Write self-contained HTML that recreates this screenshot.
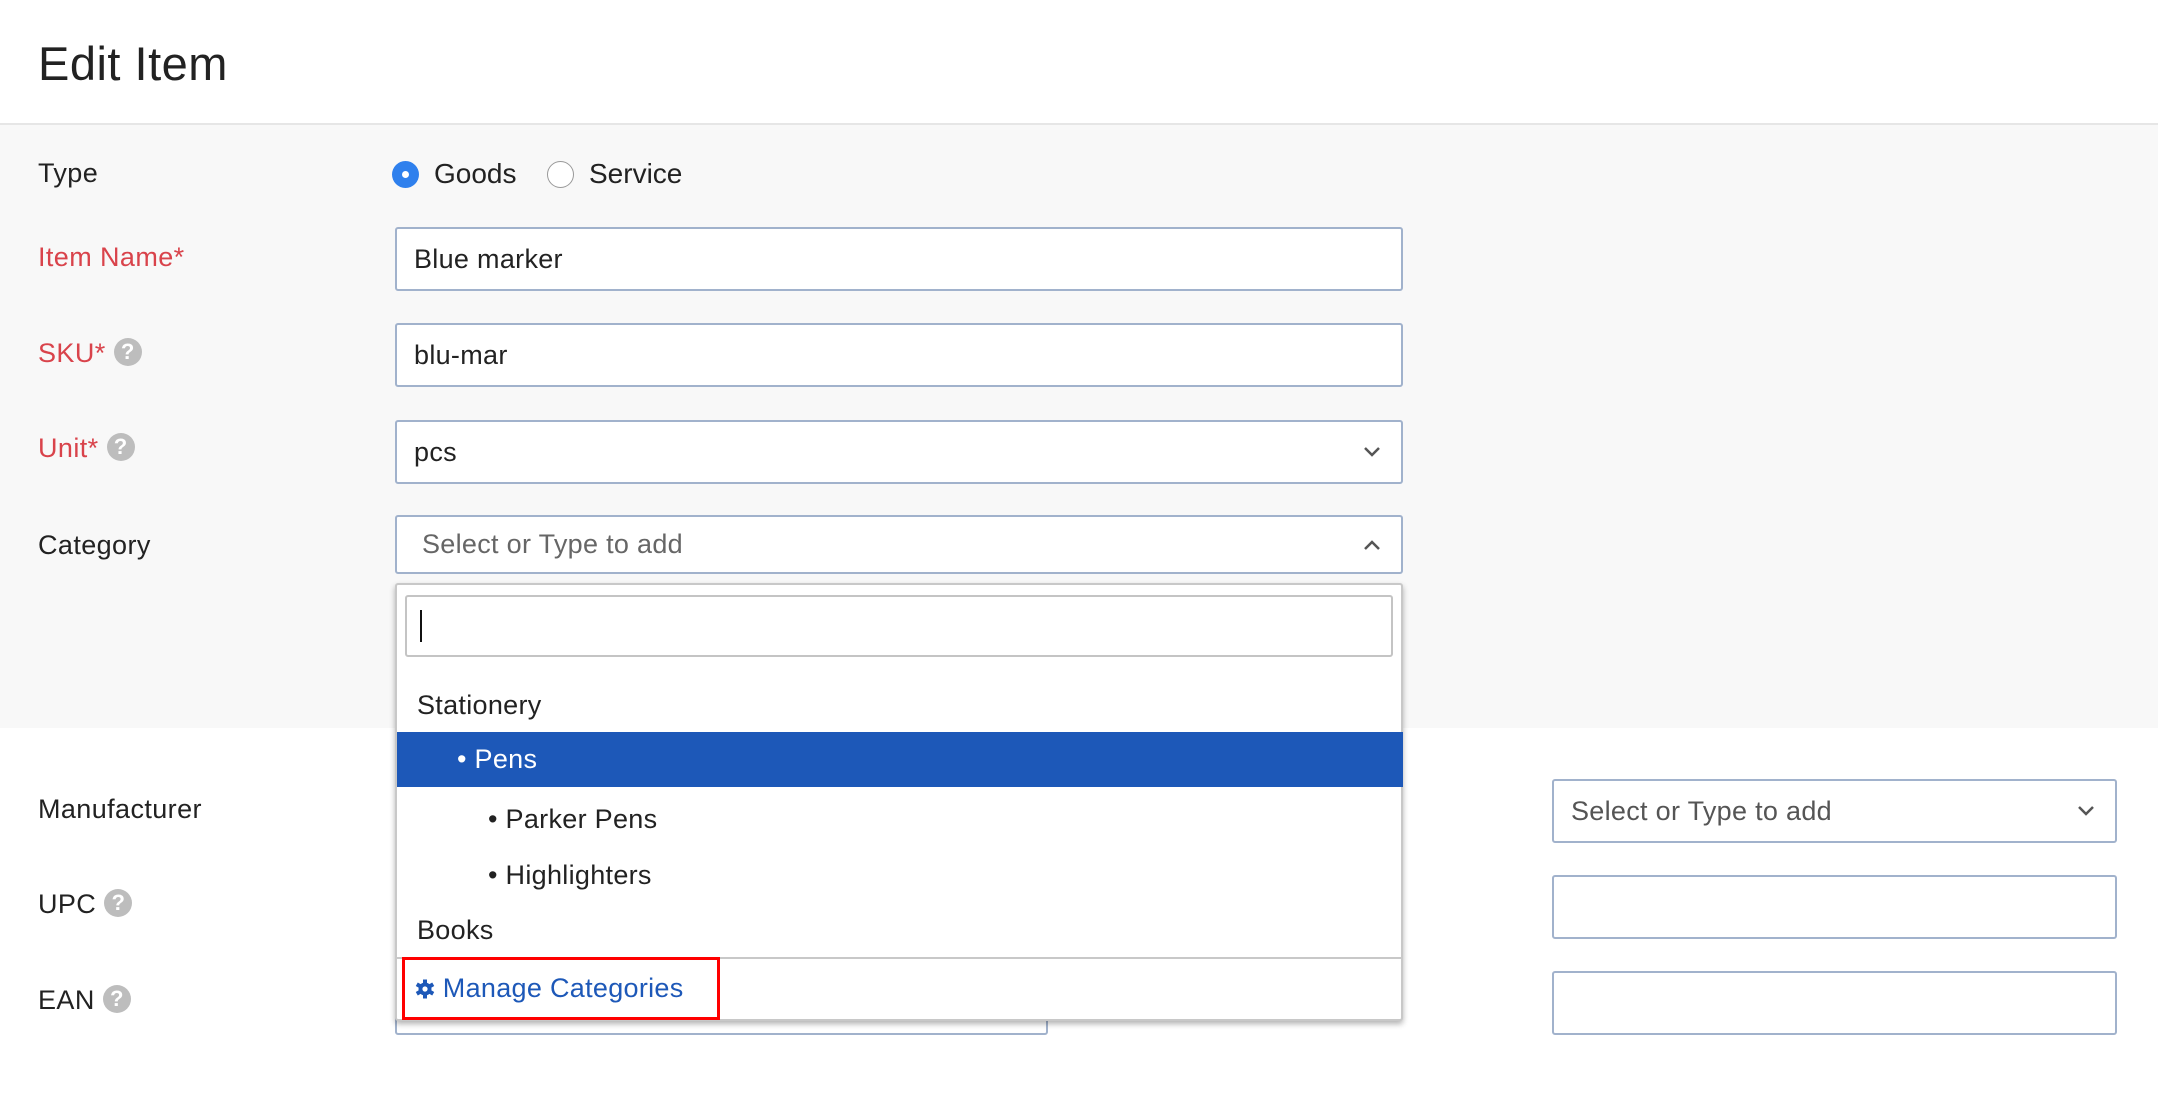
<!DOCTYPE html>
<html><head><meta charset="utf-8"><style>
*{box-sizing:border-box;margin:0;padding:0}
body{width:2158px;height:1108px;position:relative;background:#fff;font-family:"Liberation Sans",sans-serif;color:#222;overflow:hidden}
.abs{position:absolute}
.hdr{left:0;top:0;width:2158px;height:125px;border-bottom:2px solid #e6e6e6;background:#fff}
.title{left:38px;top:36px;font-size:47px;color:#222;letter-spacing:0.5px}
.gray{left:0;top:125px;width:2158px;height:603px;background:#f8f8f8}
.lbl{font-size:27px;left:38px;line-height:30px;letter-spacing:0.4px}
.red{color:#d9434b}
.inp{border:2px solid #a1b2cc;border-radius:3px;background:#fff;font-size:27px;padding-left:17px;display:flex;align-items:center;letter-spacing:0.3px}
.q{display:inline-block;width:28px;height:28px;border-radius:50%;background:#bdbdbd;color:#fff;font-size:22px;font-weight:bold;text-align:center;line-height:28px;vertical-align:3px;margin-left:8px;letter-spacing:0}
.chev{position:absolute;right:20px;top:50%;margin-top:-6px}
.item{position:absolute;left:0;width:1006px;font-size:27px;line-height:40px;letter-spacing:0.3px}
</style></head><body>
<div class="abs hdr"></div>
<div class="abs title">Edit Item</div>
<div class="abs gray"></div>

<div class="abs lbl" style="top:158px">Type</div>
<div class="abs" style="left:392px;top:161px;width:27px;height:27px;border-radius:50%;background:#2f80ed"><div style="position:absolute;left:10px;top:10px;width:7px;height:7px;border-radius:50%;background:#fff"></div></div>
<div class="abs" style="left:434px;top:158px;font-size:28px">Goods</div>
<div class="abs" style="left:547px;top:161px;width:27px;height:27px;border-radius:50%;border:1.5px solid #999;background:#fff"></div>
<div class="abs" style="left:589px;top:158px;font-size:28px">Service</div>

<div class="abs lbl red" style="top:242px">Item Name*</div>
<div class="abs inp" style="left:395px;top:227px;width:1008px;height:64px">Blue marker</div>
<div class="abs lbl red" style="top:338px">SKU*<span class="q">?</span></div>
<div class="abs inp" style="left:395px;top:323px;width:1008px;height:64px">blu-mar</div>
<div class="abs lbl red" style="top:433px">Unit*<span class="q">?</span></div>
<div class="abs inp" style="left:395px;top:420px;width:1008px;height:64px">pcs<svg class="chev" width="18" height="12" viewBox="0 0 18 12"><path d="M2 2l7 7 7-7" fill="none" stroke="#555" stroke-width="2.5"/></svg></div>
<div class="abs lbl" style="top:530px">Category</div>
<div class="abs inp" style="left:395px;top:515px;width:1008px;height:59px;color:#666;padding-left:25px">Select or Type to add<svg class="chev" width="18" height="12" viewBox="0 0 18 12"><path d="M2 10l7-7 7 7" fill="none" stroke="#555" stroke-width="2.5"/></svg></div>

<div class="abs lbl" style="top:794px">Manufacturer</div>
<div class="abs lbl" style="top:889px">UPC<span class="q">?</span></div>
<div class="abs lbl" style="top:985px">EAN<span class="q">?</span></div>
<div class="abs inp" style="left:395px;top:972px;width:653px;height:63px"></div>

<div class="abs inp" style="left:1552px;top:779px;width:565px;height:64px;color:#555">Select or Type to add<svg class="chev" width="18" height="12" viewBox="0 0 18 12"><path d="M2 2l7 7 7-7" fill="none" stroke="#555" stroke-width="2.5"/></svg></div>
<div class="abs inp" style="left:1552px;top:875px;width:565px;height:64px"></div>
<div class="abs inp" style="left:1552px;top:971px;width:565px;height:64px"></div>

<div class="abs" style="left:395px;top:583px;width:1008px;height:438px;background:#fff;border:2px solid #c8c8c8;border-radius:3px;box-shadow:0 3px 6px rgba(0,0,0,.3)">
 <div class="abs" style="left:8px;top:10px;width:988px;height:62px;border:2px solid #c4c4c4;border-radius:3px"><div class="abs" style="left:13px;top:13px;width:2px;height:32px;background:#111"></div></div>
 <div class="item" style="top:100px;padding-left:20px">Stationery</div>
 <div class="item" style="top:147px;height:55px;background:#1d58b8;color:#fff;line-height:55px;padding-left:60px">• Pens</div>
 <div class="item" style="top:214px;padding-left:91px">• Parker Pens</div>
 <div class="item" style="top:270px;padding-left:91px">• Highlighters</div>
 <div class="item" style="top:325px;padding-left:20px">Books</div>
 <div class="abs" style="left:0;top:372px;width:1006px;height:2px;background:#c8c8c8"></div>
 <div class="abs" style="left:5px;top:372px;width:318px;height:63px;border:3px solid #f00"></div>
 <div class="abs" style="left:18px;top:387px;font-size:27px;color:#1d58b8;line-height:32px;letter-spacing:0.3px"><svg width="20" height="20" viewBox="0 0 20 20" style="vertical-align:-2px"><g fill="#1d58b8"><circle cx="10" cy="10" r="6.5"/><rect x="8" y="0.5" width="4" height="19"/><rect x="8" y="0.5" width="4" height="19" transform="rotate(60 10 10)"/><rect x="8" y="0.5" width="4" height="19" transform="rotate(120 10 10)"/></g><circle cx="10" cy="10" r="2.6" fill="#fff"/></svg> Manage Categories</div>
</div>
</body></html>
